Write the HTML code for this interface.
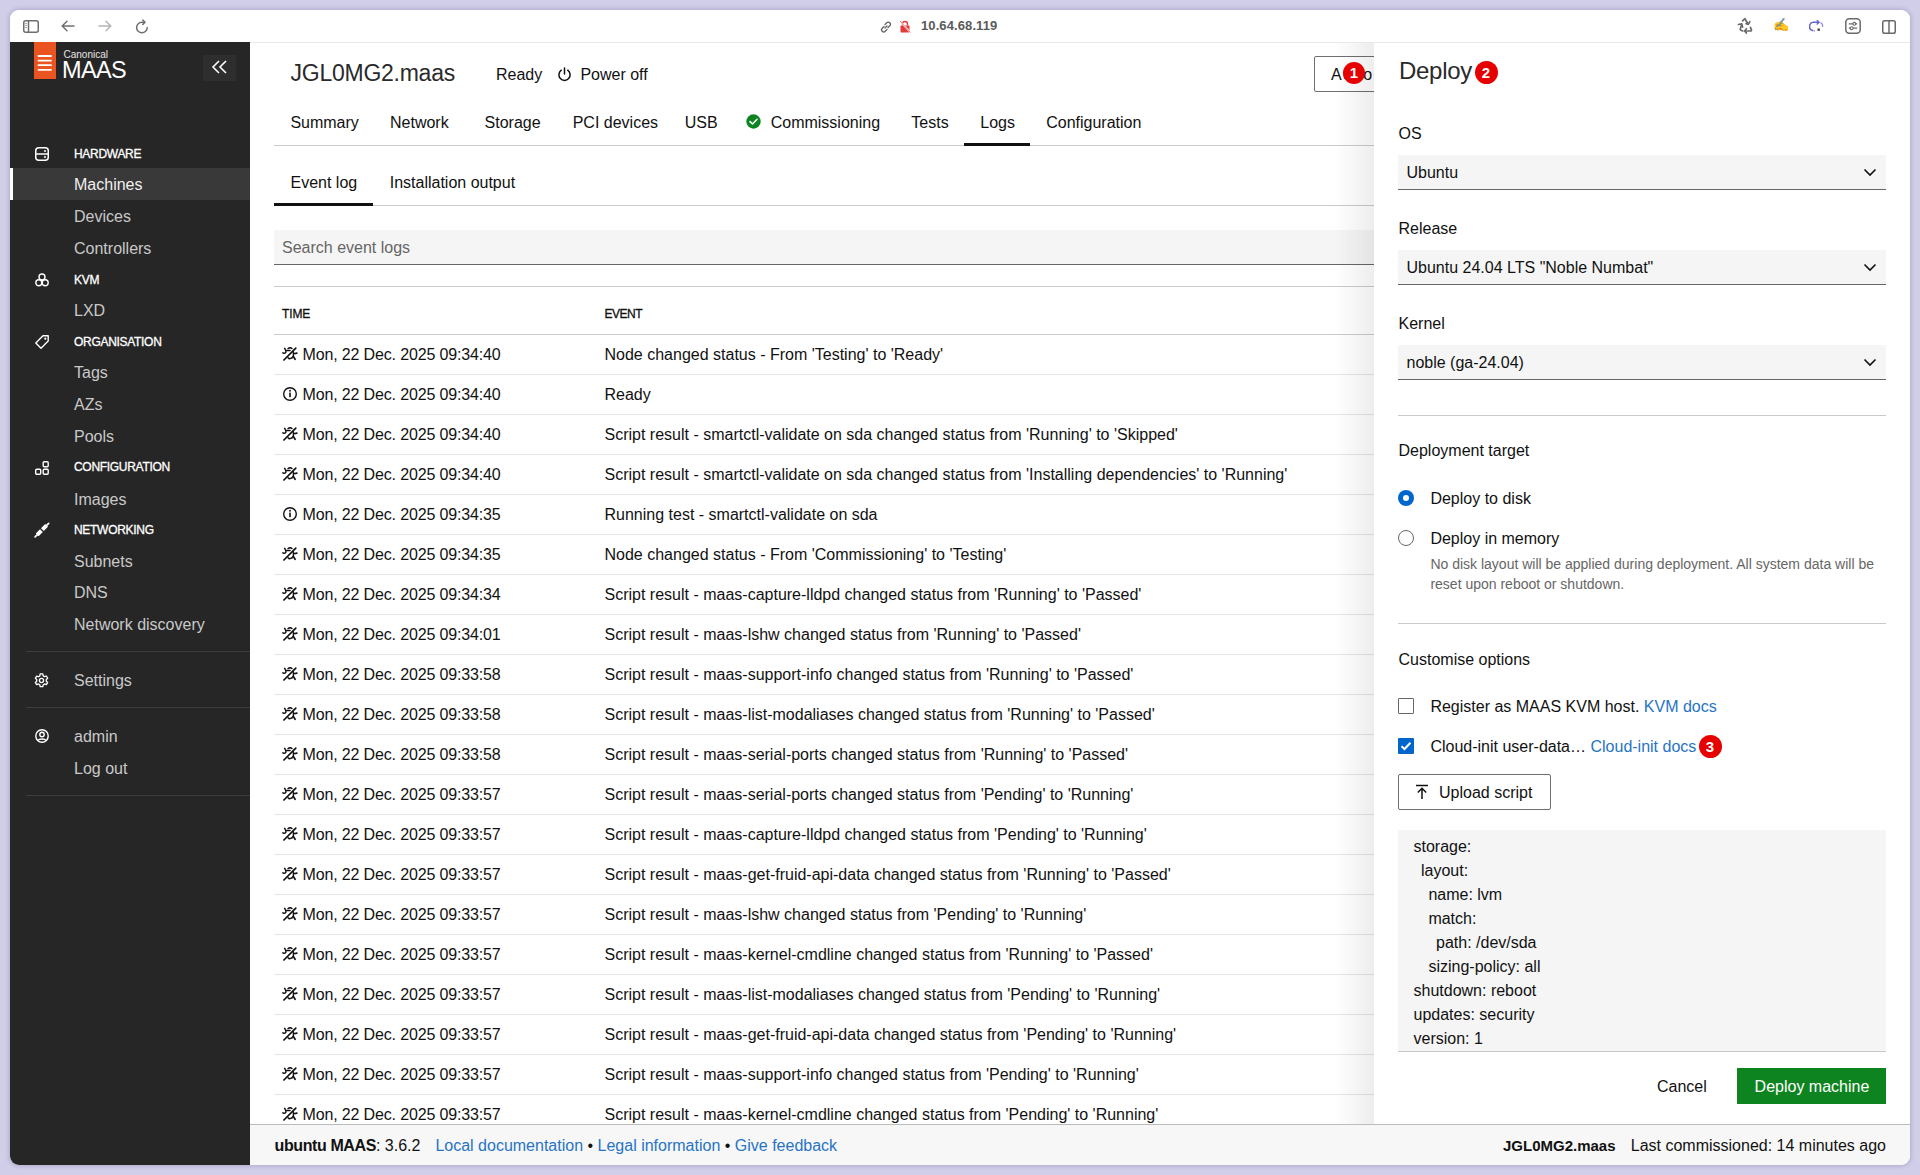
<!DOCTYPE html>
<html><head><meta charset="utf-8">
<style>
*{box-sizing:border-box;margin:0;padding:0}
html,body{width:1920px;height:1175px;overflow:hidden;background:#d0cee8;font-family:"Liberation Sans",sans-serif;color:#111}
.win{position:absolute;left:10px;top:10px;width:1900px;height:1155px;border-radius:9px;overflow:hidden;background:#fff;box-shadow:0 0 4px 1px rgba(60,50,110,0.22)}
.a{position:absolute;white-space:nowrap}
.t{position:absolute;white-space:nowrap;line-height:24px;height:24px;font-size:16px;padding-top:1px}
.tb{position:absolute;left:0;top:0;width:1900px;height:33px;background:#fff;border-bottom:1px solid #e9e9e9}
.side{position:absolute;left:0;top:32px;width:240px;height:1123px;background:#262626}
.sh{position:absolute;left:64px;font-size:12px;font-weight:normal;-webkit-text-stroke:0.3px #fff;color:#fff;letter-spacing:-0.3px;line-height:20px;height:20px}
.si{position:absolute;left:64px;font-size:16px;color:#c9c9c9;line-height:24px;height:24px;padding-top:1px}
.ic{position:absolute;left:24px}
.dv{position:absolute;left:16px;width:224px;height:1px;background:#3d3d3d}
.bug{position:absolute;left:272px;width:16px;height:14px}
.badge{position:absolute;border-radius:50%;background:#e60000;color:#fff;font-size:15px;font-weight:bold;text-align:center}
</style></head><body>
<svg width="0" height="0" style="position:absolute"><defs>
<symbol id="bug" viewBox="0 0 16 14"><g fill="none" stroke="#111" stroke-width="1.5" stroke-linecap="round"><path d="M1.9 13L13.8 1.1" stroke-width="1.7"/><path d="M6.1 1.5Q8.3 0 9.9 1.5"/><path d="M4.8 3.5H8"/><path d="M2.7 1.4C3.3 2.5 4.4 4.3 3.8 5.4C3.2 6.3 1.8 6.4 0.9 5.9"/><path d="M11.7 6.4Q13.6 6.7 15 6"/><path d="M11.2 4.8C12.2 8 11.2 11 8.3 11.6C7.2 11.8 6.6 11.3 6.1 10.7"/><path d="M11.3 9.4L13.1 12.3" stroke-width="1.7"/></g></symbol>
<symbol id="info" viewBox="0 0 16 14"><circle cx="8" cy="7" r="6.3" fill="none" stroke="#111" stroke-width="1.4"/><rect x="7.2" y="5.6" width="1.6" height="4.6" fill="#111"/><circle cx="8" cy="3.8" r="0.95" fill="#111"/></symbol>
</defs></svg>
<div class="win">
<div class="a" style="left:240px;top:32px;width:1660px;height:1092px;background:#fff;overflow:hidden"></div>
<div class="t" style="left:280.5px;top:47.0px;font-size:23px;letter-spacing:-0.25px;line-height:30px;height:30px;color:#2a2a2a">JGL0MG2.maas</div>
<div class="t" style="left:486.0px;top:51.5px;color:#111">Ready</div>
<svg class="a" style="left:547px;top:57px" width="15" height="15" viewBox="0 0 15 15"><path d="M4.3 3.2A5.6 5.6 0 1 0 10.7 3.2" fill="none" stroke="#111" stroke-width="1.5" stroke-linecap="round"/><line x1="7.5" y1="1" x2="7.5" y2="7" stroke="#111" stroke-width="1.5" stroke-linecap="round"/></svg>
<div class="t" style="left:570.4px;top:51.5px;color:#111">Power off</div>
<div class="a" style="left:1304px;top:46px;width:90px;height:36px;border:1px solid #707070;border-radius:2px"></div>
<div class="t" style="left:1321.0px;top:51.5px;color:#111;letter-spacing:1.4px">Action</div>
<div class="t" style="left:280.4px;top:100.0px;color:#111">Summary</div>
<div class="t" style="left:380.0px;top:100.0px;color:#111">Network</div>
<div class="t" style="left:474.6px;top:100.0px;color:#111">Storage</div>
<div class="t" style="left:562.7px;top:100.0px;color:#111">PCI devices</div>
<div class="t" style="left:674.7px;top:100.0px;color:#111">USB</div>
<div class="t" style="left:760.7px;top:100.0px;color:#111">Commissioning</div>
<div class="t" style="left:901.3px;top:100.0px;color:#111">Tests</div>
<div class="t" style="left:970.3px;top:100.0px;color:#111">Logs</div>
<div class="t" style="left:1036.2px;top:100.0px;color:#111">Configuration</div>
<svg class="a" style="left:736px;top:104px" width="15" height="15" viewBox="0 0 15 15"><circle cx="7.5" cy="7.5" r="7.2" fill="#0e8420"/><path d="M4 7.6L6.5 10L11 5.3" fill="none" stroke="#fff" stroke-width="1.6" stroke-linecap="round" stroke-linejoin="round"/></svg>
<div class="a" style="left:264px;top:135px;width:1100px;height:1px;background:#cacaca"></div>
<div class="a" style="left:954px;top:133px;width:66px;height:3px;background:#111"></div>
<div class="t" style="left:280.5px;top:160.0px;color:#111">Event log</div>
<div class="t" style="left:379.7px;top:160.0px;color:#111">Installation output</div>
<div class="a" style="left:264px;top:195px;width:1100px;height:1px;background:#cacaca"></div>
<div class="a" style="left:264px;top:193px;width:99px;height:3px;background:#111"></div>
<div class="a" style="left:264px;top:220px;width:1100px;height:35px;background:#f5f5f5;border-bottom:1.5px solid #666"></div>
<div class="t" style="left:272.0px;top:225.0px;color:#666">Search event logs</div>
<div class="a" style="left:264px;top:276px;width:1100px;height:1px;background:#cacaca"></div>
<div class="t" style="left:272.0px;top:290.5px;font-size:12px;-webkit-text-stroke:0.3px #111;letter-spacing:-0.1px;color:#111">TIME</div>
<div class="t" style="left:594.5px;top:290.5px;font-size:12px;-webkit-text-stroke:0.3px #111;letter-spacing:-0.5px;color:#111">EVENT</div>
<div class="a" style="left:264px;top:324px;width:1100px;height:1px;background:#cacaca"></div>
<svg class="bug" style="top:337px"><use href="#bug"/></svg>
<div class="t" style="left:292.5px;top:332.0px;color:#111;letter-spacing:-0.15px">Mon, 22 Dec. 2025 09:34:40</div>
<div class="t" style="left:594.5px;top:332.0px;color:#111">Node changed status - From &#39;Testing&#39; to &#39;Ready&#39;</div>
<div class="a" style="left:264px;top:364px;width:1100px;height:1px;background:#e5e5e5"></div>
<svg class="bug" style="top:377px"><use href="#info"/></svg>
<div class="t" style="left:292.5px;top:372.0px;color:#111;letter-spacing:-0.15px">Mon, 22 Dec. 2025 09:34:40</div>
<div class="t" style="left:594.5px;top:372.0px;color:#111">Ready</div>
<div class="a" style="left:264px;top:404px;width:1100px;height:1px;background:#e5e5e5"></div>
<svg class="bug" style="top:417px"><use href="#bug"/></svg>
<div class="t" style="left:292.5px;top:412.0px;color:#111;letter-spacing:-0.15px">Mon, 22 Dec. 2025 09:34:40</div>
<div class="t" style="left:594.5px;top:412.0px;color:#111">Script result - smartctl-validate on sda changed status from &#39;Running&#39; to &#39;Skipped&#39;</div>
<div class="a" style="left:264px;top:444px;width:1100px;height:1px;background:#e5e5e5"></div>
<svg class="bug" style="top:457px"><use href="#bug"/></svg>
<div class="t" style="left:292.5px;top:452.0px;color:#111;letter-spacing:-0.15px">Mon, 22 Dec. 2025 09:34:40</div>
<div class="t" style="left:594.5px;top:452.0px;color:#111">Script result - smartctl-validate on sda changed status from &#39;Installing dependencies&#39; to &#39;Running&#39;</div>
<div class="a" style="left:264px;top:484px;width:1100px;height:1px;background:#e5e5e5"></div>
<svg class="bug" style="top:497px"><use href="#info"/></svg>
<div class="t" style="left:292.5px;top:492.0px;color:#111;letter-spacing:-0.15px">Mon, 22 Dec. 2025 09:34:35</div>
<div class="t" style="left:594.5px;top:492.0px;color:#111">Running test - smartctl-validate on sda</div>
<div class="a" style="left:264px;top:524px;width:1100px;height:1px;background:#e5e5e5"></div>
<svg class="bug" style="top:537px"><use href="#bug"/></svg>
<div class="t" style="left:292.5px;top:532.0px;color:#111;letter-spacing:-0.15px">Mon, 22 Dec. 2025 09:34:35</div>
<div class="t" style="left:594.5px;top:532.0px;color:#111">Node changed status - From &#39;Commissioning&#39; to &#39;Testing&#39;</div>
<div class="a" style="left:264px;top:564px;width:1100px;height:1px;background:#e5e5e5"></div>
<svg class="bug" style="top:577px"><use href="#bug"/></svg>
<div class="t" style="left:292.5px;top:572.0px;color:#111;letter-spacing:-0.15px">Mon, 22 Dec. 2025 09:34:34</div>
<div class="t" style="left:594.5px;top:572.0px;color:#111">Script result - maas-capture-lldpd changed status from &#39;Running&#39; to &#39;Passed&#39;</div>
<div class="a" style="left:264px;top:604px;width:1100px;height:1px;background:#e5e5e5"></div>
<svg class="bug" style="top:617px"><use href="#bug"/></svg>
<div class="t" style="left:292.5px;top:612.0px;color:#111;letter-spacing:-0.15px">Mon, 22 Dec. 2025 09:34:01</div>
<div class="t" style="left:594.5px;top:612.0px;color:#111">Script result - maas-lshw changed status from &#39;Running&#39; to &#39;Passed&#39;</div>
<div class="a" style="left:264px;top:644px;width:1100px;height:1px;background:#e5e5e5"></div>
<svg class="bug" style="top:657px"><use href="#bug"/></svg>
<div class="t" style="left:292.5px;top:652.0px;color:#111;letter-spacing:-0.15px">Mon, 22 Dec. 2025 09:33:58</div>
<div class="t" style="left:594.5px;top:652.0px;color:#111">Script result - maas-support-info changed status from &#39;Running&#39; to &#39;Passed&#39;</div>
<div class="a" style="left:264px;top:684px;width:1100px;height:1px;background:#e5e5e5"></div>
<svg class="bug" style="top:697px"><use href="#bug"/></svg>
<div class="t" style="left:292.5px;top:692.0px;color:#111;letter-spacing:-0.15px">Mon, 22 Dec. 2025 09:33:58</div>
<div class="t" style="left:594.5px;top:692.0px;color:#111">Script result - maas-list-modaliases changed status from &#39;Running&#39; to &#39;Passed&#39;</div>
<div class="a" style="left:264px;top:724px;width:1100px;height:1px;background:#e5e5e5"></div>
<svg class="bug" style="top:737px"><use href="#bug"/></svg>
<div class="t" style="left:292.5px;top:732.0px;color:#111;letter-spacing:-0.15px">Mon, 22 Dec. 2025 09:33:58</div>
<div class="t" style="left:594.5px;top:732.0px;color:#111">Script result - maas-serial-ports changed status from &#39;Running&#39; to &#39;Passed&#39;</div>
<div class="a" style="left:264px;top:764px;width:1100px;height:1px;background:#e5e5e5"></div>
<svg class="bug" style="top:777px"><use href="#bug"/></svg>
<div class="t" style="left:292.5px;top:772.0px;color:#111;letter-spacing:-0.15px">Mon, 22 Dec. 2025 09:33:57</div>
<div class="t" style="left:594.5px;top:772.0px;color:#111">Script result - maas-serial-ports changed status from &#39;Pending&#39; to &#39;Running&#39;</div>
<div class="a" style="left:264px;top:804px;width:1100px;height:1px;background:#e5e5e5"></div>
<svg class="bug" style="top:817px"><use href="#bug"/></svg>
<div class="t" style="left:292.5px;top:812.0px;color:#111;letter-spacing:-0.15px">Mon, 22 Dec. 2025 09:33:57</div>
<div class="t" style="left:594.5px;top:812.0px;color:#111">Script result - maas-capture-lldpd changed status from &#39;Pending&#39; to &#39;Running&#39;</div>
<div class="a" style="left:264px;top:844px;width:1100px;height:1px;background:#e5e5e5"></div>
<svg class="bug" style="top:857px"><use href="#bug"/></svg>
<div class="t" style="left:292.5px;top:852.0px;color:#111;letter-spacing:-0.15px">Mon, 22 Dec. 2025 09:33:57</div>
<div class="t" style="left:594.5px;top:852.0px;color:#111">Script result - maas-get-fruid-api-data changed status from &#39;Running&#39; to &#39;Passed&#39;</div>
<div class="a" style="left:264px;top:884px;width:1100px;height:1px;background:#e5e5e5"></div>
<svg class="bug" style="top:897px"><use href="#bug"/></svg>
<div class="t" style="left:292.5px;top:892.0px;color:#111;letter-spacing:-0.15px">Mon, 22 Dec. 2025 09:33:57</div>
<div class="t" style="left:594.5px;top:892.0px;color:#111">Script result - maas-lshw changed status from &#39;Pending&#39; to &#39;Running&#39;</div>
<div class="a" style="left:264px;top:924px;width:1100px;height:1px;background:#e5e5e5"></div>
<svg class="bug" style="top:937px"><use href="#bug"/></svg>
<div class="t" style="left:292.5px;top:932.0px;color:#111;letter-spacing:-0.15px">Mon, 22 Dec. 2025 09:33:57</div>
<div class="t" style="left:594.5px;top:932.0px;color:#111">Script result - maas-kernel-cmdline changed status from &#39;Running&#39; to &#39;Passed&#39;</div>
<div class="a" style="left:264px;top:964px;width:1100px;height:1px;background:#e5e5e5"></div>
<svg class="bug" style="top:977px"><use href="#bug"/></svg>
<div class="t" style="left:292.5px;top:972.0px;color:#111;letter-spacing:-0.15px">Mon, 22 Dec. 2025 09:33:57</div>
<div class="t" style="left:594.5px;top:972.0px;color:#111">Script result - maas-list-modaliases changed status from &#39;Pending&#39; to &#39;Running&#39;</div>
<div class="a" style="left:264px;top:1004px;width:1100px;height:1px;background:#e5e5e5"></div>
<svg class="bug" style="top:1017px"><use href="#bug"/></svg>
<div class="t" style="left:292.5px;top:1012.0px;color:#111;letter-spacing:-0.15px">Mon, 22 Dec. 2025 09:33:57</div>
<div class="t" style="left:594.5px;top:1012.0px;color:#111">Script result - maas-get-fruid-api-data changed status from &#39;Pending&#39; to &#39;Running&#39;</div>
<div class="a" style="left:264px;top:1044px;width:1100px;height:1px;background:#e5e5e5"></div>
<svg class="bug" style="top:1057px"><use href="#bug"/></svg>
<div class="t" style="left:292.5px;top:1052.0px;color:#111;letter-spacing:-0.15px">Mon, 22 Dec. 2025 09:33:57</div>
<div class="t" style="left:594.5px;top:1052.0px;color:#111">Script result - maas-support-info changed status from &#39;Pending&#39; to &#39;Running&#39;</div>
<div class="a" style="left:264px;top:1084px;width:1100px;height:1px;background:#e5e5e5"></div>
<svg class="bug" style="top:1097px"><use href="#bug"/></svg>
<div class="t" style="left:292.5px;top:1092.0px;color:#111;letter-spacing:-0.15px">Mon, 22 Dec. 2025 09:33:57</div>
<div class="t" style="left:594.5px;top:1092.0px;color:#111">Script result - maas-kernel-cmdline changed status from &#39;Pending&#39; to &#39;Running&#39;</div>

<div class="a" style="left:1324.0px;top:32.0px;width:40.0px;height:1082.0px;background:linear-gradient(to right,rgba(0,0,0,0),rgba(0,0,0,0.07))"></div>
<div class="a" style="left:1364.0px;top:32.0px;width:536.0px;height:1082.0px;background:#fff"></div>
<div class="t" style="left:1389.0px;top:45.0px;font-size:24px;line-height:30px;height:30px;color:#2a2a2a;letter-spacing:-0.3px">Deploy</div>
<div class="a badge" style="left:1333.0px;top:52.4px;width:22px;height:22px;line-height:22px">1</div>
<div class="a badge" style="left:1464.5px;top:51.2px;width:23px;height:23px;line-height:23px">2</div>
<div class="t" style="left:1388.5px;top:111.0px;color:#111">OS</div>
<div class="a" style="left:1388.0px;top:145.0px;width:488.0px;height:35.0px;background:#f5f5f5;border-bottom:1.5px solid #666"></div>
<div class="t" style="left:1396.5px;top:150.0px;color:#111">Ubuntu</div>
<svg class="a" style="left:1853.0px;top:158.0px" width="14" height="9" viewBox="0 0 14 9"><path d="M1.5 1.5L7 7L12.5 1.5" fill="none" stroke="#111" stroke-width="1.6"/></svg>
<div class="t" style="left:1388.5px;top:206.3px;color:#111">Release</div>
<div class="a" style="left:1388.0px;top:240.3px;width:488.0px;height:35.0px;background:#f5f5f5;border-bottom:1.5px solid #666"></div>
<div class="t" style="left:1396.5px;top:245.3px;color:#111">Ubuntu 24.04 LTS &quot;Noble Numbat&quot;</div>
<svg class="a" style="left:1853.0px;top:253.3px" width="14" height="9" viewBox="0 0 14 9"><path d="M1.5 1.5L7 7L12.5 1.5" fill="none" stroke="#111" stroke-width="1.6"/></svg>
<div class="t" style="left:1388.5px;top:301.3px;color:#111">Kernel</div>
<div class="a" style="left:1388.0px;top:335.3px;width:488.0px;height:35.0px;background:#f5f5f5;border-bottom:1.5px solid #666"></div>
<div class="t" style="left:1396.5px;top:340.3px;color:#111">noble (ga-24.04)</div>
<svg class="a" style="left:1853.0px;top:348.3px" width="14" height="9" viewBox="0 0 14 9"><path d="M1.5 1.5L7 7L12.5 1.5" fill="none" stroke="#111" stroke-width="1.6"/></svg>
<div class="a" style="left:1388.0px;top:405.0px;width:488.0px;height:1.0px;background:#cacaca"></div>
<div class="t" style="left:1388.5px;top:428.0px;color:#111">Deployment target</div>
<svg class="a" style="left:1388px;top:480px" width="16" height="16" viewBox="0 0 16 16"><circle cx="8" cy="8" r="8" fill="#0066cc"/><circle cx="8" cy="8" r="3" fill="#fff"/></svg>
<div class="t" style="left:1420.4px;top:476.0px;color:#111">Deploy to disk</div>
<svg class="a" style="left:1388px;top:520px" width="16" height="16" viewBox="0 0 16 16"><circle cx="8" cy="8" r="7.5" fill="#fff" stroke="#666" stroke-width="1"/></svg>
<div class="t" style="left:1420.4px;top:516.0px;color:#111">Deploy in memory</div>
<div class="t" style="left:1420.4px;top:543.0px;font-size:14px;line-height:20px;height:20px;color:#666">No disk layout will be applied during deployment. All system data will be</div>
<div class="t" style="left:1420.4px;top:563.0px;font-size:14px;line-height:20px;height:20px;color:#666">reset upon reboot or shutdown.</div>
<div class="a" style="left:1388.0px;top:613.0px;width:488.0px;height:1.0px;background:#cacaca"></div>
<div class="t" style="left:1388.5px;top:636.5px;color:#111">Customise options</div>
<div class="a" style="left:1388px;top:688px;width:16px;height:16px;border:1px solid #666;border-radius:1px;background:#fff"></div>
<div class="t" style="left:1420.4px;top:684.0px;color:#111">Register as MAAS KVM host. <span style="color:#2774c4">KVM docs</span></div>
<svg class="a" style="left:1388px;top:728px" width="16" height="16" viewBox="0 0 16 16"><rect width="16" height="16" rx="1" fill="#0066cc"/><path d="M3.5 8.2L6.5 11L12.5 4.8" fill="none" stroke="#fff" stroke-width="2"/></svg>
<div class="t" style="left:1420.4px;top:724.0px;color:#111">Cloud-init user-data&hellip; <span style="color:#2774c4">Cloud-init docs</span></div>
<div class="a badge" style="left:1688.5px;top:724.5px;width:23px;height:23px;line-height:23px">3</div>
<div class="a" style="left:1388.0px;top:764.0px;width:153.0px;height:36.0px;border:1px solid #707070;border-radius:2px;background:#fff"></div>
<svg class="a" style="left:1404px;top:774px" width="16" height="16" viewBox="0 0 16 16"><path d="M2 1.5H14M8 15V4.5M3.8 8.5L8 4.3L12.2 8.5" fill="none" stroke="#111" stroke-width="1.5"/></svg>
<div class="t" style="left:1429.0px;top:770.0px;color:#111">Upload script</div>
<div class="a" style="left:1388.0px;top:820.0px;width:488.0px;height:222.0px;background:#f5f5f5;border-bottom:1px solid #c8c8c8;overflow:hidden"></div>
<div class="a" style="left:1403.5px;top:825px;font-size:16px;line-height:24px;color:#111">storage:</div><div class="a" style="left:1411.0px;top:849px;font-size:16px;line-height:24px;color:#111">layout:</div><div class="a" style="left:1418.4px;top:873px;font-size:16px;line-height:24px;color:#111">name: lvm</div><div class="a" style="left:1418.4px;top:897px;font-size:16px;line-height:24px;color:#111">match:</div><div class="a" style="left:1426.0px;top:921px;font-size:16px;line-height:24px;color:#111">path: /dev/sda</div><div class="a" style="left:1418.4px;top:945px;font-size:16px;line-height:24px;color:#111">sizing-policy: all</div><div class="a" style="left:1403.5px;top:969px;font-size:16px;line-height:24px;color:#111">shutdown: reboot</div><div class="a" style="left:1403.5px;top:993px;font-size:16px;line-height:24px;color:#111">updates: security</div><div class="a" style="left:1403.5px;top:1017px;font-size:16px;line-height:24px;color:#111">version: 1</div>
<div class="t" style="left:1647.0px;top:1064.0px;color:#111">Cancel</div>
<div class="a" style="left:1727.0px;top:1058.0px;width:149.0px;height:36.0px;background:#0e8420"></div>
<div class="t" style="left:1744.6px;top:1064.0px;color:#fff">Deploy machine</div>
<div class="a" style="left:240.0px;top:1114.0px;width:1660.0px;height:41.0px;background:#f7f7f7;border-top:1px solid #bcbcbc"></div>
<div class="t" style="left:264.6px;top:1123.0px;color:#111"><b style="letter-spacing:-0.4px">ubuntu MAAS</b>: 3.6.2</div>
<div class="t" style="left:425.4px;top:1123.0px;color:#111"><span style="color:#2774c4">Local documentation</span> &bull; <span style="color:#2774c4">Legal information</span> &bull; <span style="color:#2774c4">Give feedback</span></div>
<div class="t" style="left:1493px;top:1123.0px;color:#111;font-weight:bold;font-size:15px">JGL0MG2.maas</div><div class="t" style="right:24px;top:1123.0px;color:#111">Last commissioned: 14 minutes ago</div>

  <!-- browser toolbar -->
  <div class="tb">
    <svg class="a" style="left:13px;top:10px" width="16" height="13" viewBox="0 0 16 13"><rect x="0.75" y="0.75" width="14.5" height="11.5" rx="2" fill="none" stroke="#6e6e6e" stroke-width="1.5"/><line x1="5.5" y1="1" x2="5.5" y2="12" stroke="#6e6e6e" stroke-width="1.5"/><path d="M2.3 3.6H3.7M2.3 5.6H3.7M2.3 7.6H3.7" stroke="#6e6e6e" stroke-width="0.9"/></svg>
    <svg class="a" style="left:51px;top:10px" width="14" height="12" viewBox="0 0 14 12"><path d="M13 6H1.5M6 1.2L1.2 6L6 10.8" fill="none" stroke="#707070" stroke-width="1.5" stroke-linecap="round" stroke-linejoin="round"/></svg>
    <svg class="a" style="left:88px;top:10px" width="14" height="12" viewBox="0 0 14 12"><path d="M1 6H12.5M8 1.2L12.8 6L8 10.8" fill="none" stroke="#b5b5b5" stroke-width="1.5" stroke-linecap="round" stroke-linejoin="round"/></svg>
    <svg class="a" style="left:124px;top:9px" width="16" height="16" viewBox="0 0 16 16"><path d="M13.2 8.5A5.3 5.3 0 1 1 8 3.2H10.5" fill="none" stroke="#707070" stroke-width="1.5" stroke-linecap="round"/><path d="M8.8 1L11 3.2L8.8 5.4" fill="none" stroke="#707070" stroke-width="1.5" stroke-linecap="round" stroke-linejoin="round"/></svg>
    <svg class="a" style="left:869px;top:10px" width="14" height="14" viewBox="0 0 14 14"><path d="M6 8L8 6M5 6.5L3.2 8.3a2.1 2.1 0 0 0 3 3L8 9.5M9 7.5l1.8-1.8a2.1 2.1 0 0 0-3-3L6 4.5" fill="none" stroke="#666" stroke-width="1.3" stroke-linecap="round"/></svg>
    <svg class="a" style="left:889px;top:10px" width="12" height="13" viewBox="0 0 12 13"><path d="M3.5 5.5V4a2.5 2.5 0 0 1 5 0v1.5" fill="none" stroke="#e23b3b" stroke-width="1.4"/><rect x="1.5" y="5.5" width="9" height="7" rx="1" fill="#e23b3b"/><line x1="1" y1="1" x2="11.5" y2="12.5" stroke="#fff" stroke-width="1.6"/><line x1="1" y1="1" x2="11.5" y2="12.5" stroke="#e23b3b" stroke-width="0.7"/></svg>
    <div class="a" style="left:911px;top:8px;font-size:13px;line-height:16px;color:#5a5a5a;font-weight:bold;letter-spacing:0.1px">10.64.68.119</div>
    <svg class="a" style="left:1726px;top:6px" width="20" height="20" viewBox="0 0 20 20"><g fill="none" stroke="#6a6a6a" stroke-width="1.7" stroke-linecap="round" stroke-linejoin="round"><path d="M6.6 4.9L8.9 2.7L12.2 8.2"/><path d="M10.1 7.6L12.3 8.4L13.8 5.6"/><path d="M6.8 15L4.6 14Q3.9 13.5 4.3 12.8L5.8 8.2"/><path d="M2.4 8.5L5.7 7.9L6.6 11.1"/><path d="M14.4 11.3L15.5 13.9Q15.6 15 14.5 15H8.9"/><path d="M10.4 12.6L8.8 15L10.4 17"/></g></svg>
    <div class="a" style="left:1763px;top:7px;font-size:13px;line-height:16px;color:#e8a317">&#9997;</div>
    <svg class="a" style="left:1799px;top:10px" width="15" height="12" viewBox="0 0 15 12"><path d="M3.5 10.5A4.2 4.2 0 0 1 4.2 2.3H9.5" fill="none" stroke="#6464d0" stroke-width="1.5" stroke-linecap="round"/><path d="M8.2 0.6L10 2.3L8.2 4" fill="none" stroke="#6464d0" stroke-width="1.4" stroke-linecap="round"/><path d="M11.5 2.5A4 4 0 0 1 13.5 7" fill="none" stroke="#8a8ae0" stroke-width="1.2"/><path d="M4.5 10.8H6" stroke="#8a8ae0" stroke-width="1.2"/><rect x="8.5" y="8.5" width="2.4" height="2.4" fill="#444"/></svg>
    <svg class="a" style="left:1835px;top:8px" width="16" height="16" viewBox="0 0 16 16"><rect x="0.8" y="0.8" width="14.4" height="14.4" rx="3.5" fill="none" stroke="#6a6a6a" stroke-width="1.5"/><path d="M3.8 5.8H12.2M3.8 10.2H12.2" stroke="#6a6a6a" stroke-width="1.2"/><circle cx="9.3" cy="5.8" r="1.4" fill="#fff" stroke="#6a6a6a" stroke-width="1.1"/><circle cx="6.7" cy="10.2" r="1.4" fill="#fff" stroke="#6a6a6a" stroke-width="1.1"/></svg>
    <svg class="a" style="left:1872px;top:10px" width="14" height="14" viewBox="0 0 14 14"><rect x="0.75" y="0.75" width="12.5" height="12.5" rx="1.8" fill="none" stroke="#6a6a6a" stroke-width="1.5"/><line x1="7" y1="1" x2="7" y2="13" stroke="#6a6a6a" stroke-width="1.5"/></svg>
  </div>

  <!-- sidebar -->
  <div class="side">
    <div class="a" style="left:24px;top:0;width:22px;height:37px;background:#e95420"></div>
    <svg class="a" style="left:27px;top:12px" width="16" height="17" viewBox="0 0 16 17"><g stroke="#fff" stroke-width="1.8" stroke-linecap="round"><line x1="1.5" y1="2" x2="14" y2="2"/><line x1="1.5" y1="6.6" x2="14" y2="6.6"/><line x1="1.5" y1="11.2" x2="14" y2="11.2"/><line x1="1.5" y1="15.8" x2="14" y2="15.8"/></g></svg>
    <div class="a" style="left:53.5px;top:6px;font-size:10px;line-height:14px;color:#e6e6e6">Canonical</div>
    <div class="a" style="left:52px;top:13px;font-size:23.5px;line-height:30px;color:#fff;letter-spacing:-0.6px">MAAS</div>
    <div class="a" style="left:193px;top:13px;width:33px;height:26px;background:#2e2e2e"></div>
    <svg class="a" style="left:201px;top:18px" width="17" height="14" viewBox="0 0 17 14"><path d="M8 1L2 7L8 13M15 1L9 7L15 13" fill="none" stroke="#fff" stroke-width="1.6"/></svg>
    <div class="a" style="left:0;top:126px;width:240px;height:32px;background:#393939"></div>
    <div class="a" style="left:0;top:126px;width:3px;height:32px;background:#fff"></div>
    <svg class="ic" style="left:25px;top:105px" width="14" height="14" viewBox="0 0 14 14"><g fill="none" stroke="#fff" stroke-width="1.5"><rect x="0.75" y="0.75" width="12.5" height="12.5" rx="3"/><line x1="1" y1="7" x2="13" y2="7"/></g><circle cx="10" cy="4" r="1" fill="#fff"/><circle cx="10" cy="10" r="1" fill="#fff"/></svg>
    <svg class="ic" style="left:25px;top:231px" width="14" height="14" viewBox="0 0 14 14"><g fill="none" stroke="#fff" stroke-width="1.4"><circle cx="7" cy="4" r="3"/><circle cx="3.8" cy="9.8" r="3"/><circle cx="10.2" cy="9.8" r="3"/></g></svg>
    <svg class="ic" style="left:25px;top:293px" width="14" height="14" viewBox="0 0 14 14"><path d="M8 0.8H13.2V6L6 13.2L0.8 8Z" fill="none" stroke="#fff" stroke-width="1.4" stroke-linejoin="round"/><circle cx="10.3" cy="3.7" r="1.1" fill="#fff"/></svg>
    <svg class="ic" style="left:25px;top:419px" width="14" height="14" viewBox="0 0 14 14"><g fill="none" stroke="#fff" stroke-width="1.4"><rect x="8.2" y="0.7" width="5" height="5" rx="1"/><rect x="0.7" y="8.2" width="5" height="5" rx="1"/><rect x="8.2" y="8.2" width="5" height="5" rx="1"/></g></svg>
    <svg class="ic" style="left:24px;top:480px" width="16" height="16" viewBox="0 0 16 16"><g stroke="#fff" stroke-linecap="butt"><path d="M1.1 14.9L4.2 11.8" stroke-width="1.7" stroke-linecap="round"/><path d="M3.2 12.8L7.4 8.6" stroke-width="4"/><path d="M8.4 7.6L12.6 3.4" stroke-width="4"/><path d="M11.8 4.2L14.7 1.3" stroke-width="1.7" stroke-linecap="round"/></g></svg>
    <svg class="ic" style="left:24px;top:631px" width="15" height="15" viewBox="0 0 16 16"><path d="M6.6 1h2.8l.4 2 1.5.9 1.9-.7 1.4 2.4-1.5 1.3v1.8l1.5 1.3-1.4 2.4-1.9-.7-1.5.9-.4 2H6.6l-.4-2-1.5-.9-1.9.7L1.4 10.1l1.5-1.3V7L1.4 5.7l1.4-2.4 1.9.7 1.5-.9z" fill="none" stroke="#fff" stroke-width="1.4" stroke-linejoin="round"/><circle cx="8" cy="8" r="2.2" fill="none" stroke="#fff" stroke-width="1.4"/></svg>
    <svg class="ic" style="left:25px;top:687px" width="14" height="14" viewBox="0 0 14 14"><g fill="none" stroke="#fff" stroke-width="1.4"><circle cx="7" cy="7" r="6.2"/><circle cx="7" cy="5.5" r="2.2"/><path d="M3 11.5C4 9.5 10 9.5 11 11.5"/></g></svg>
    <div class="dv" style="top:609px"></div>
    <div class="dv" style="top:665px"></div>
    <div class="dv" style="top:753px"></div>
<div class="sh" style="top:101.7px">HARDWARE</div>
<div class="sh" style="top:227.5px">KVM</div>
<div class="sh" style="top:289.5px">ORGANISATION</div>
<div class="sh" style="top:414.9px">CONFIGURATION</div>
<div class="sh" style="top:477.6px">NETWORKING</div>
<div class="si" style="top:130.3px;color:#f0f0f0">Machines</div>
<div class="si" style="top:162.0px">Devices</div>
<div class="si" style="top:194.0px">Controllers</div>
<div class="si" style="top:256.0px">LXD</div>
<div class="si" style="top:317.7px">Tags</div>
<div class="si" style="top:350.0px">AZs</div>
<div class="si" style="top:381.5px">Pools</div>
<div class="si" style="top:444.5px">Images</div>
<div class="si" style="top:506.5px">Subnets</div>
<div class="si" style="top:538.0px">DNS</div>
<div class="si" style="top:569.7px">Network discovery</div>
<div class="si" style="top:626.0px">Settings</div>
<div class="si" style="top:682.0px">admin</div>
<div class="si" style="top:714.0px">Log out</div>

  </div>
</div>
</body></html>
